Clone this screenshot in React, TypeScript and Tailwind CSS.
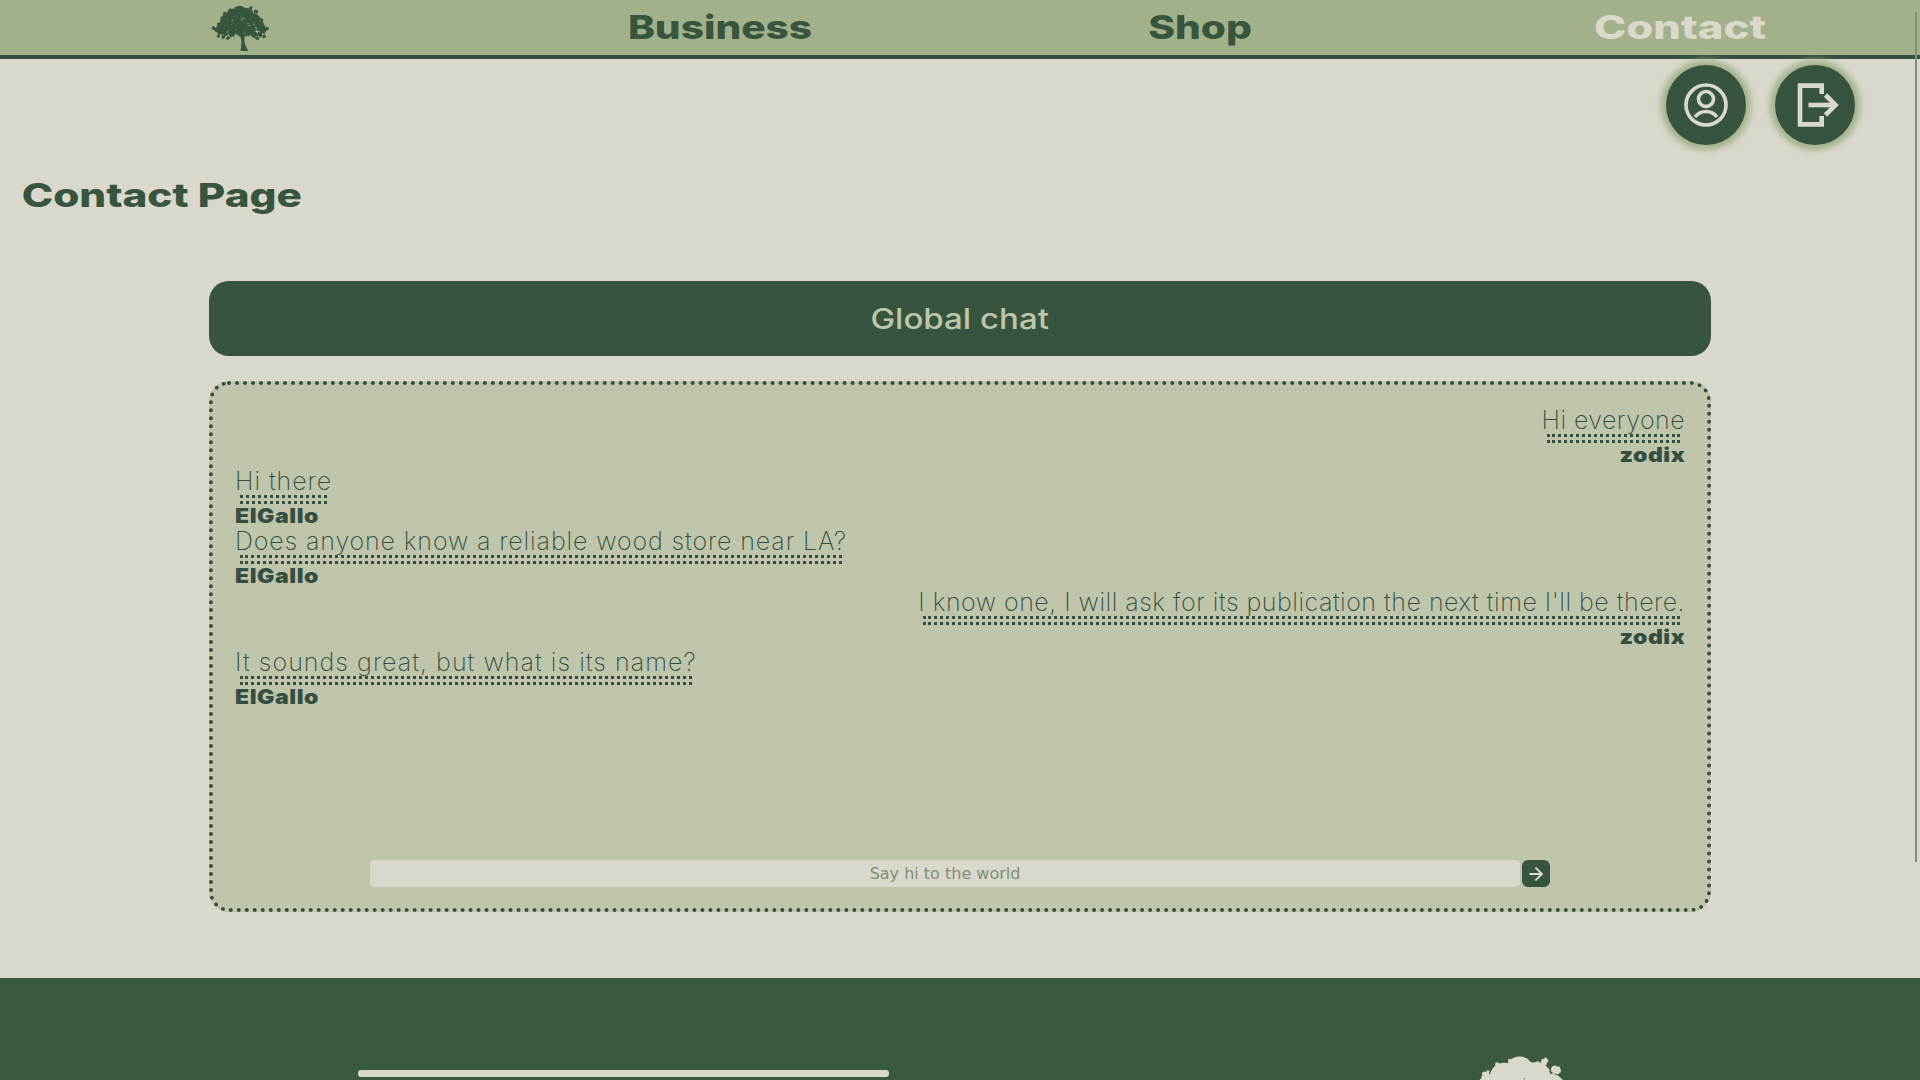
import { ArrowRight } from 'lucide-react'

const blobs = [
  [82, 20, 18], [62, 28, 18], [104, 26, 17], [44, 44, 18], [122, 42, 18], [82, 42, 28], [30, 62, 14],
  [140, 62, 14], [56, 60, 22], [112, 60, 22], [84, 62, 22], [16, 72, 7], [24, 80, 6], [150, 74, 8],
  [40, 82, 8], [58, 84, 8], [122, 84, 9], [140, 84, 7], [104, 82, 7], [6, 68, 4], [160, 68, 4],
  [34, 92, 3], [48, 96, 3], [132, 96, 4], [152, 90, 3], [20, 90, 2.5], [114, 8, 3], [128, 20, 4],
  [40, 24, 3], [146, 44, 4],
]

// rough leaf edge and gaps in the crown
const rand = (n: number) => Math.abs(Math.sin(n * 12.9898) * 43758.5453) % 1
const leaves = blobs.flatMap(([cx, cy, r], i) =>
  [0, 1, 2, 3, 4, 5, 6, 7].map((k) => {
    const a = rand(i * 8 + k) * Math.PI * 2
    return [cx + Math.cos(a) * r, cy + Math.sin(a) * r, 1 + rand(i + k * 3) * 2]
  })
)
const gaps = Array.from({ length: 34 }, (_, i) => [
  40 + rand(i + 100) * 90,
  30 + rand(i + 200) * 58,
  0.7 + rand(i + 300) * 1.3,
])

function Tree({ className, gap }: { className: string; gap: string }) {
  return (
    <svg viewBox="0 0 165 133" className={className} fill="currentColor">
      {blobs.map(([cx, cy, r], i) => (
        <circle key={i} cx={cx} cy={cy} r={r} />
      ))}
      {leaves.map(([cx, cy, r], i) => (
        <circle key={i} cx={cx} cy={cy} r={r} />
      ))}
      {gaps.map(([cx, cy, r], i) => (
        <circle key={i} cx={cx} cy={cy} r={r} fill={gap} />
      ))}
      <path d="M80 60 L94 60 L96 110 L106 133 L84 133 L87 110 Z" />
      <path d="M86 95 L60 76 L64 72 L90 88 Z M92 95 L120 76 L116 72 L90 88 Z" />
    </svg>
  )
}

function Message({ text, name, right, tracking }: { text: string; name: string; right?: boolean; tracking: string }) {
  return (
    <div className={right ? 'self-end flex flex-col items-end' : 'self-start flex flex-col items-start'}>
      <div className="w-full">
        <p className={`font-['Inter',sans-serif] font-extralight text-[25px] leading-[28px] text-[#344e41] whitespace-nowrap ${tracking}`}>
          {text}
        </p>
        <div className="mx-[5px] h-[9px] border-y-[3px] border-dotted border-[#344e41]" />
      </div>
      <p
        className={
          right
            ? "pt-[2px] origin-right scale-x-[1.15] font-['Inter',sans-serif] font-black text-[20px] leading-[21.5px] tracking-[0.5px] text-[#344e41]"
            : "pt-[2px] origin-left scale-x-[1.15] font-['Inter',sans-serif] font-black text-[20px] leading-[21.5px] tracking-[0.5px] text-[#344e41]"
        }
      >
        {name}
      </p>
    </div>
  )
}

export default function App() {
  return (
    <div className="relative h-screen overflow-hidden flex flex-col bg-[#dad7cd] font-['Inter',sans-serif]">
      {/* Navigation */}
      <nav className="h-[59px] shrink-0 grid grid-cols-4 items-center bg-[#a3b18a] border-b-[4px] border-[#344e41] pt-[1px] font-extrabold text-[33px] text-[#38553f]">
        <div className="flex justify-center">
          <Tree className="w-[58px] h-[46px] text-[#38553f]" gap="#a3b18a" />
        </div>
        <div className="text-center scale-x-[1.23]">Business</div>
        <div className="text-center scale-x-[1.23]">Shop</div>
        <div className="text-center scale-x-[1.32] text-[#dad7cd]">Contact</div>
      </nav>

      {/* Account buttons */}
      <div className="flex justify-end gap-[29px] pr-[65px] pt-[6px]">
        <button className="w-[80px] h-[80px] rounded-full bg-[#375440] text-[#dad7cd] shadow-[0_0_6px_5px_#a3b18a]">
          <svg viewBox="0 0 80 80" className="w-full h-full" fill="none" stroke="currentColor" strokeWidth="3.6">
            <circle cx="40" cy="40" r="20" />
            <circle cx="40" cy="34" r="7.5" />
            <path d="M29 52 C32 48 36 46.5 40 46.5 C44 46.5 48 48 51 52" />
          </svg>
        </button>
        <button className="w-[80px] h-[80px] rounded-full bg-[#375440] text-[#dad7cd] shadow-[0_0_6px_5px_#a3b18a]">
          <svg viewBox="0 0 80 80" className="w-full h-full" fill="none" stroke="currentColor" strokeWidth="4.6">
            <path d="M46.7 29 V20.6 H25 V59.4 H46.7 V51" />
            <path d="M33.5 40 H60" />
            <path d="M50.5 30 L60.5 40 L50.5 50" />
          </svg>
        </button>
      </div>

      <h1 className="mt-[30px] pl-[17px] origin-left scale-x-[1.28] font-extrabold text-[33px] leading-[40px] text-[#38553f]">Contact Page</h1>

      {/* Chat */}
      <div className="mt-[66px] mx-[209px]">
        <div className="h-[75px] rounded-[20px] bg-[#375440] flex items-center justify-center text-[#bfc5ab]">
          <span className="scale-x-[1.18] font-medium text-[28px]">Global chat</span>
        </div>
        <div className="mt-[25px] h-[531px] rounded-[20px] border-[4px] border-dotted border-[#344e41] bg-[#bfc5ab] flex flex-col px-[22px] pt-[21px] pb-[21px]">
          <div className="flex-1 flex flex-col">
            <Message right text="Hi everyone" name="zodix" tracking="tracking-[0.45px]" />
            <Message text="Hi there" name="ElGallo" tracking="tracking-[0.95px]" />
            <Message text="Does anyone know a reliable wood store near LA?" name="ElGallo" tracking="tracking-[0.88px]" />
            <Message right text="I know one, I will ask for its publication the next time I'll be there." name="zodix" tracking="tracking-[0.5px]" />
            <Message text="It sounds great, but what is its name?" name="ElGallo" tracking="tracking-[1.04px]" />
          </div>
          <div className="flex justify-center gap-[2px]">
            <input
              placeholder="Say hi to the world"
              className="w-[1150px] h-[27px] rounded-[4px] bg-[#dad7cd] text-center font-['DejaVu_Sans',sans-serif] text-[16px] placeholder:text-[#7f8f75] outline-none"
            />
            <button className="w-[28px] h-[27px] rounded-[6px] bg-[#375440] text-[#dad7cd] flex items-center justify-center">
              <ArrowRight className="w-[20px] h-[20px]" strokeWidth={2.4} />
            </button>
          </div>
        </div>
      </div>

      {/* Footer */}
      <footer className="mt-[66px] flex-1 flex items-start bg-[#3a5a40]">
        <div className="mt-[92px] ml-[358px] w-[531px] h-[7px] rounded-[3px] bg-[#dad7cd]" />
        <Tree className="mt-[77px] ml-[566px] w-[130px] h-[104px] shrink-0 text-[#dad7cd]" gap="#3a5a40" />
      </footer>

      {/* Scroll thumb */}
      <div className="absolute top-[12px] right-[3px] w-[2px] h-[850px] bg-[#7d917c]" />
    </div>
  )
}
